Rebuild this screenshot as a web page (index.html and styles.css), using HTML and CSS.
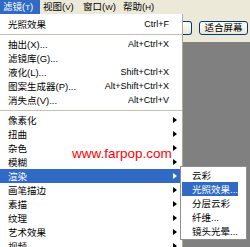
FILE: index.html
```html
<!DOCTYPE html>
<html lang="zh-CN">
<head>
    <meta charset="UTF-8">
    <title>滤镜菜单</title>
    <link rel="stylesheet" href="styles.css">
</head>
<body>
    <div class="app">
        <div class="menubar">
            <span class="mb-item active">滤镜(<u>T</u>)</span>
            <span class="mb-item">视图(<u>V</u>)</span>
            <span class="mb-item">窗口(<u>W</u>)</span>
            <span class="mb-item">帮助(<u>H</u>)</span>
        </div>
        <div class="workspace">
            <ul class="menu">
                <li class="item"><span>光照效果</span><span class="key">Ctrl+F</span></li>
                <li class="sep"></li>
                <li class="item"><span>抽出(X)...</span><span class="key">Alt+Ctrl+X</span></li>
                <li class="item"><span>滤镜库(G)...</span></li>
                <li class="item"><span>液化(L)...</span><span class="key">Shift+Ctrl+X</span></li>
                <li class="item"><span>图案生成器(P)...</span><span class="key">Alt+Shift+Ctrl+X</span></li>
                <li class="item"><span>消失点(V)...</span><span class="key">Alt+Ctrl+V</span></li>
                <li class="sep"></li>
                <li class="item"><span>像素化</span><i class="arrow"></i></li>
                <li class="item"><span>扭曲</span><i class="arrow"></i></li>
                <li class="item"><span>杂色</span><i class="arrow"></i></li>
                <li class="item"><span>模糊</span><i class="arrow"></i></li>
                <li class="item selected"><span>渲染</span><i class="arrow"></i></li>
                <li class="item"><span>画笔描边</span><i class="arrow"></i></li>
                <li class="item"><span>素描</span><i class="arrow"></i></li>
                <li class="item"><span>纹理</span><i class="arrow"></i></li>
                <li class="item"><span>艺术效果</span><i class="arrow"></i></li>
                <li class="item"><span>视频</span><i class="arrow"></i></li>
            </ul>
            <div class="side">
                <div class="toolbar">
                    <button class="btn btn-cut"></button>
                    <button class="btn">适合屏幕</button>
                </div>
                <div class="canvas"></div>
            </div>
        </div>

        <div class="watermark">www.farpop.com</div>

        <ul class="submenu">
            <li class="item"><span>云彩</span></li>
            <li class="item selected"><span>光照效果...</span></li>
            <li class="item"><span>分层云彩</span></li>
            <li class="item"><span>纤维...</span></li>
            <li class="item"><span>镜头光晕...</span></li>
        </ul>
    </div>
</body>
</html>
```

FILE: styles.css
```css
body {
    margin: 0;
    overflow: hidden;
    font-family: "Liberation Sans", "Noto Sans CJK SC", sans-serif;
    font-size: 9.5px;
    color: #000;
    background: #808080;
}
.app {
    position: relative;
    width: 250px;
    height: 247px;
    overflow: hidden;
}
.menubar {
    display: flex;
    height: 14px;
    line-height: 14px;
    background: #ece9d8;
}
.mb-item {
    width: 40px;
    padding-left: 3px;
    box-sizing: border-box;
    white-space: nowrap;
}
.mb-item u {
    font-size: 8px;
    text-decoration: none;
}
.mb-item.active {
    background: #316ac5;
    color: #fff;
}
.workspace {
    display: grid;
    grid-template-columns: 183px 1fr;
    height: 233px;
}
.menu {
    list-style: none;
    margin: 0;
    padding: 3px 0 0;
    background: #fff;
    border-right: 1px solid #aca899;
}
.item {
    display: flex;
    align-items: center;
    height: 14px;
    padding: 0 5px 0 8px;
    white-space: nowrap;
}
.item .key {
    margin-left: auto;
    margin-right: 8px;
    font-size: 9px;
}
.item.selected {
    background: #316ac5;
    color: #fff;
}
.arrow {
    margin-left: auto;
    width: 0;
    height: 0;
    border-left: 4px solid #000;
    border-top: 3.5px solid transparent;
    border-bottom: 3.5px solid transparent;
}
.selected .arrow {
    border-left-color: #fff;
}
.sep {
    height: 1px;
    margin: 3px 0 2px;
    background: #c5c2b2;
}
.side {
    display: flex;
    flex-direction: column;
}
.toolbar {
    display: flex;
    gap: 7px;
    height: 28px;
    padding-top: 7px;
    box-sizing: border-box;
    background: #ece9d8;
}
.btn {
    height: 14px;
    padding: 0;
    font: inherit;
    font-size: 9.5px;
    line-height: 12px;
    background: linear-gradient(#fff, #ece9d8);
    border: 1px solid #003c74;
    border-radius: 3px;
    width: 49px;
    white-space: nowrap;
}
.btn-cut {
    width: 9px;
    border-left: none;
    border-radius: 0 3px 3px 0;
}
.canvas {
    flex: 1;
    background: #808080;
}
.watermark {
    position: absolute;
    left: 72px;
    top: 147px;
    font-size: 13.5px;
    line-height: 1;
    color: #f00;
}
.submenu {
    position: absolute;
    left: 180px;
    top: 166px;
    width: 67px;
    box-sizing: border-box;
    list-style: none;
    margin: 0;
    padding: 1px 8px 1px 1px;
    background: #fff;
    border: 1px solid #8e8f8f;
}
.submenu .item {
    padding: 0 0 0 10px;
}
```
